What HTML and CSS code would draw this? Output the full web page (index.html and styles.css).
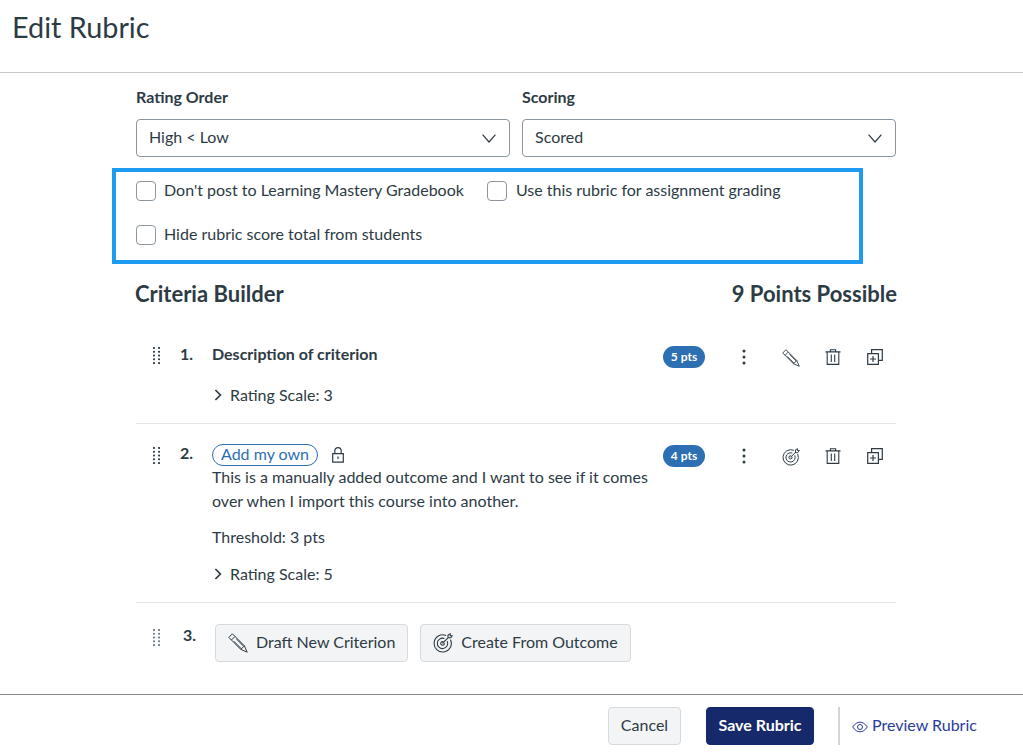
FILE: index.html
```html
<!DOCTYPE html>
<html lang="en">
<head>
<meta charset="utf-8">
<title>Edit Rubric</title>
<link rel="stylesheet" href="styles.css">
</head>
<body>
<svg class="defs" width="0" height="0" aria-hidden="true">
  <symbol id="grip" viewBox="0 0 7 17"><g fill="currentColor"><circle cx="1" cy="1" r="1.05"/><circle cx="1" cy="4.75" r="1.05"/><circle cx="1" cy="8.5" r="1.05"/><circle cx="1" cy="12.25" r="1.05"/><circle cx="1" cy="16" r="1.05"/><circle cx="6" cy="1" r="1.05"/><circle cx="6" cy="4.75" r="1.05"/><circle cx="6" cy="8.5" r="1.05"/><circle cx="6" cy="12.25" r="1.05"/><circle cx="6" cy="16" r="1.05"/></g></symbol>
  <symbol id="pencil" viewBox="0 0 20 20"><g fill="none" stroke="currentColor" stroke-width="1" stroke-linejoin="round"><path d="M.8 4.4 4.4.8 16.4 12.8 19.2 19.2 12.8 16.4Z"/><path d="M3.4 7 7 3.4M5.8 8.2 13.4 15.8M8.2 5.8 15.8 13.4M12.8 16.4 16.4 12.8"/></g></symbol>
  <symbol id="target" viewBox="0 0 20 20"><g fill="none" stroke="currentColor" stroke-width="1.1" stroke-linecap="round"><path d="M17.6 7A8.6 8.6 0 1 1 12.8 2.4"/><path d="M14.4 8.6A5.2 5.2 0 1 1 11 5.4"/><path d="M11.3 10.2A1.8 1.8 0 1 1 9.6 8.6"/><path d="M9.8 10 15 4.8M15 4.8V2L17.2 .8V2.8H19.2L17.8 4.8Z"/></g></symbol>
  <symbol id="trash" viewBox="0 0 16 16"><g fill="none" stroke="currentColor" stroke-width="1.1"><path d="M.5 2.9H15.5M5.4 2.9V.7H10.6V2.9M2.2 2.9V15.4H13.8V2.9M6.3 5.4V13M9.7 5.4V13"/></g></symbol>
  <symbol id="dup" viewBox="0 0 16 16"><g fill="none" stroke="currentColor" stroke-width="1.2"><path d="M4.6 4V.7H15.3V11.4H12"/><path d="M.7 4.6H11.4V15.3H.7ZM6 7V13M3 10H9"/></g></symbol>
  <symbol id="lock" viewBox="0 0 12 16"><g fill="none" stroke="currentColor" stroke-width="1.2"><path d="M.7 6.6H11.3V15.2H.7ZM2.8 6.6V3.8A3.2 3.2 0 0 1 9.2 3.8V6.6M6 9.6V12"/></g></symbol>
  <symbol id="chev" viewBox="0 0 14 9"><path d="M.6 .6 7 8 13.4 .6" fill="none" stroke="currentColor" stroke-width="1.2"/></symbol>
  <symbol id="right" viewBox="0 0 8 12"><path d="M1.4 1 6.4 6 1.4 11" fill="none" stroke="currentColor" stroke-width="1.7"/></symbol>
  <symbol id="eye" viewBox="0 0 16 12"><g fill="none" stroke="currentColor" stroke-width="1"><path d="M.7 6C3 2.6 5.4 1.2 8 1.2S13 2.6 15.3 6C13 9.4 10.6 10.8 8 10.8S3 9.4 .7 6Z"/><circle cx="8" cy="6" r="2.5"/></g></symbol>
  <symbol id="dots" viewBox="0 0 4 16"><g fill="currentColor"><circle cx="2" cy="2" r="1.5"/><circle cx="2" cy="8" r="1.5"/><circle cx="2" cy="14" r="1.5"/></g></symbol>
</svg>

<header class="page-header"><h1>Edit Rubric</h1></header>

<main class="content">
  <div class="selects">
    <div class="field">
      <label class="field-label">Rating Order</label>
      <div class="select"><span>High &lt; Low</span><svg class="chev"><use href="#chev"/></svg></div>
    </div>
    <div class="field">
      <label class="field-label">Scoring</label>
      <div class="select"><span>Scored</span><svg class="chev"><use href="#chev"/></svg></div>
    </div>
  </div>

  <div class="highlight">
    <div class="check-row">
      <label class="check"><span class="box"></span>Don't post to Learning Mastery Gradebook</label>
      <label class="check wide"><span class="box"></span>Use this rubric for assignment grading</label>
    </div>
    <div class="check-row">
      <label class="check"><span class="box"></span>Hide rubric score total from students</label>
    </div>
  </div>

  <div class="builder-head">
    <h2>Criteria Builder</h2>
    <h2>9 Points Possible</h2>
  </div>

  <section class="criterion first">
    <svg class="grip"><use href="#grip"/></svg>
    <span class="num">1.</span>
    <div class="body">
      <div class="title">Description of criterion</div>
      <div class="scale"><svg class="right"><use href="#right"/></svg>Rating Scale: 3</div>
    </div>
    <div class="tools">
      <span class="pts">5 pts</span>
      <svg class="dots"><use href="#dots"/></svg>
      <svg class="tool pencil"><use href="#pencil"/></svg>
      <svg class="tool trash"><use href="#trash"/></svg>
      <svg class="tool dup"><use href="#dup"/></svg>
    </div>
  </section>

  <section class="criterion second">
    <svg class="grip"><use href="#grip"/></svg>
    <span class="num">2.</span>
    <div class="body">
      <div class="pill-row"><span class="pill">Add my own</span><svg class="lock"><use href="#lock"/></svg></div>
      <p class="desc">This is a manually added outcome and I want to see if it comes over when I import this course into another.</p>
      <p class="threshold">Threshold: 3 pts</p>
      <div class="scale"><svg class="right"><use href="#right"/></svg>Rating Scale: 5</div>
    </div>
    <div class="tools">
      <span class="pts">4 pts</span>
      <svg class="dots"><use href="#dots"/></svg>
      <svg class="tool pencil"><use href="#target"/></svg>
      <svg class="tool trash"><use href="#trash"/></svg>
      <svg class="tool dup"><use href="#dup"/></svg>
    </div>
  </section>

  <section class="new-row">
    <svg class="grip light"><use href="#grip"/></svg>
    <span class="num">3.</span>
    <button class="btn"><svg class="btn-icon"><use href="#pencil"/></svg>Draft New Criterion</button>
    <button class="btn"><svg class="btn-icon"><use href="#target"/></svg>Create From Outcome</button>
  </section>
</main>

<footer class="page-footer">
  <button class="btn cancel">Cancel</button>
  <button class="btn save">Save Rubric</button>
  <span class="sep"></span>
  <a class="preview"><svg class="eye"><use href="#eye"/></svg>Preview Rubric</a>
</footer>
</body>
</html>
```

FILE: styles.css
```css
* { box-sizing: border-box; }
html, body { margin: 0; padding: 0; }
body {
  width: 1023px;
  height: 754px;
  overflow: hidden;
  background: #fff;
  color: #2d3b45;
  font-family: Lato, "Liberation Sans", sans-serif;
  font-size: 16px;
  line-height: 24px;
}
.defs { position: absolute; }
svg { display: block; flex: none; }

.page-header { height: 73px; border-bottom: 1px solid #c7c7c7; padding: 8px 0 0 12px; }
.page-header h1 { margin: 0; font-size: 28.8px; line-height: 38px; font-weight: 400; }

.content { width: 760px; margin-left: 136px; }

.selects { display: flex; gap: 12px; padding-top: 12px; }
.field { width: 374px; }
.field-label { display: block; font-weight: 700; font-size: 16px; line-height: 24px; margin-bottom: 10px; }
.select {
  height: 38px; border: 1px solid #8b969e; border-radius: 4px;
  display: flex; align-items: center; justify-content: space-between;
  padding: 0 13px 2px 12px;
}
.chev { width: 14px; height: 9px; margin-top: 2px; }

.highlight {
  width: 751px; height: 96px; margin: 11px 0 0 -24px;
  border: 4px solid #1d9bf0; padding: 6px 0 0 20px;
  display: flex; flex-direction: column; gap: 20px;
}
.check-row { display: flex; gap: 23px; }
.check { display: flex; align-items: flex-start; gap: 8px; }
.wide { gap: 9px; }
.box { width: 20px; height: 20px; margin-top: 3px; border: 1px solid #8b969e; border-radius: 4px; }

.builder-head { display: flex; justify-content: space-between; margin: 13px -1px 0 -1px; }
.builder-head h2 { margin: 0; font-size: 22px; line-height: 33px; font-weight: 700; }

.criterion { display: flex; }
.first { height: 114px; padding-top: 32px; border-bottom: 1px solid #e4e7e9; }
.second { height: 179px; padding-top: 19px; border-bottom: 1px solid #e4e7e9; }
.grip { width: 7px; height: 17px; margin: 5px 0 0 17px; color: #2d3b45; }
.second .grip { margin-top: 4px; }
.light { color: #6b7780; }
.num { width: 32px; margin-left: 20px; font-weight: 700; }
.second .num { margin-top: -2px; }
.body { width: 443px; }
.title { font-weight: 700; }
.scale { display: flex; align-items: center; gap: 8px; margin-top: 17px; }
.right { width: 8px; height: 12px; margin-left: 2px; }
.pill-row { display: flex; align-items: flex-start; gap: 14px; height: 21px; margin-top: 1px; }
.pill {
  border: 1px solid #2d6fb3; border-radius: 12px; color: #2d6fb3;
  height: 22px; line-height: 18px; padding: 0 8px; width: 106px;
  white-space: nowrap; flex: none;
}
.lock { width: 12px; height: 16px; margin-top: 3px; }
.desc { margin: 0; }
.threshold { margin: 12px 0 0; }
.second .scale { margin-top: 13px; }

.tools { display: flex; align-items: flex-start; margin: 3px 0 0 8px; }
.second .tools { margin-top: 1px; }
.pts {
  width: 42px; height: 22px; border-radius: 11px; background: #2d6fb3; color: #fff;
  font-size: 12px; line-height: 22px; font-weight: 700; text-align: center; margin-top: 1px;
}
.dots { width: 4px; height: 16px; margin: 4px 0 0 37px; }
.tool { width: 16px; height: 16px; margin-top: 4px; }
.pencil { width: 18px; height: 18px; margin-left: 36px; }
.trash { margin-left: 25px; }
.dup { margin-left: 26px; margin-right: 0; }

.new-row { display: flex; align-items: flex-start; height: 91px; padding-top: 21px; }
.new-row .grip { margin-top: 5px; }
.new-row .num { margin-left: 23px; margin-top: -1px; }
.new-row .btn + .btn { margin-left: 12px; }

.btn {
  height: 38px; border: 1px solid #d7dadd; border-radius: 4px; background: #f3f4f5;
  color: #2d3b45; font: inherit; display: inline-flex; align-items: center; padding: 0 12px 2px;
}
.btn-icon { width: 20px; height: 20px; margin: 2px 8px 0 0; }

.page-footer {
  border-top: 1px solid #8a8a8a; height: 62px;
  display: flex; align-items: flex-start; padding: 12px 0 0 608px;
}
.cancel { width: 73px; justify-content: center; padding: 0 0 2px; }
.save { width: 108px; justify-content: center; padding: 0 0 2px; margin-left: 25px; background: #16296b; border-color: #16296b; color: #fff; font-weight: 700; }
.sep { width: 2px; height: 38px; background: #d0d5d9; margin-left: 24px; }
.preview { display: flex; align-items: center; gap: 4px; margin: 6px 0 0 12px; color: #2b3a9c; }
.eye { width: 16px; height: 12px; margin-top: 3px; }
```
